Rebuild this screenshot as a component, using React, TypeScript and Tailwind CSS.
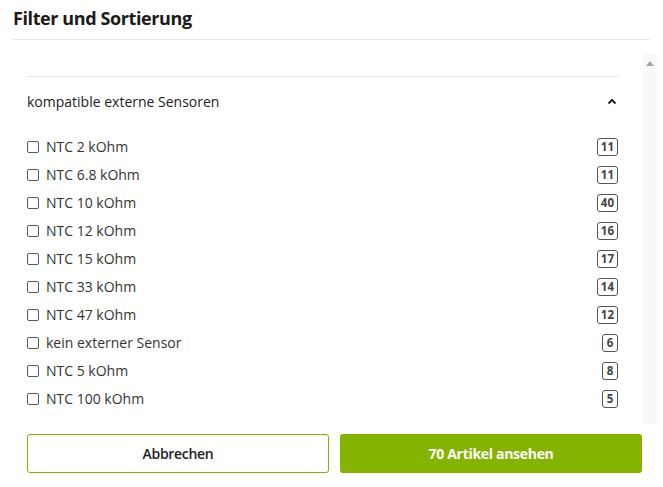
import React from 'react';

const items: { label: string; count: number }[] = [
    { label: 'NTC 2 kOhm', count: 11 },
    { label: 'NTC 6.8 kOhm', count: 11 },
    { label: 'NTC 10 kOhm', count: 40 },
    { label: 'NTC 12 kOhm', count: 16 },
    { label: 'NTC 15 kOhm', count: 17 },
    { label: 'NTC 33 kOhm', count: 14 },
    { label: 'NTC 47 kOhm', count: 12 },
    { label: 'kein externer Sensor', count: 6 },
    { label: 'NTC 5 kOhm', count: 8 },
    { label: 'NTC 100 kOhm', count: 5 },
];

const FilterRow: React.FC<{ label: string; count: number }> = ({ label, count }) => (
    <label className="flex items-center h-[28px] cursor-pointer">
        <span className="w-[12px] h-[12px] border border-[#5a5a5a] rounded-[2px] bg-white shrink-0" />
        <span className="ml-[7px] text-[14px] text-[#333] leading-none">{label}</span>
        <span className="ml-auto mr-[1px] min-w-[16px] h-[18px] px-[3px] border border-[#555] rounded-[3px] flex items-center justify-center text-[11.5px] font-bold text-[#444] leading-none">
            {count}
        </span>
    </label>
);

export default function App() {
    return (
        <div
            className="w-[663px] h-[487px] bg-white flex flex-col overflow-hidden"
            style={{ fontFamily: '"Open Sans", "Liberation Sans", sans-serif' }}
        >
            <header className="mx-[13px] h-[40px] border-b border-[#e6e6e6] flex items-center">
                <h1 className="text-[18px] font-bold text-[#1a1a1a] tracking-[-0.4px] -mt-[3px]">Filter und Sortierung</h1>
            </header>

            <div className="flex h-[384px]">
                <div className="pl-[27px] w-[619px] pt-[36px]">
                    <div className="border-t border-[#e6e6e6]">
                        <div className="flex items-center justify-between h-[48px]">
                            <span className="text-[14px] text-[#222]">kompatible externe Sensoren</span>
                            <svg width="10" height="7" viewBox="0 0 10 7" className="mr-[2px]">
                                <path d="M1.5 5.5 L5 2 L8.5 5.5" fill="none" stroke="#222" strokeWidth="2" />
                            </svg>
                        </div>
                        <div className="mt-[8px] flex flex-col">
                            {items.map((it) => (
                                <FilterRow key={it.label} label={it.label} count={it.count} />
                            ))}
                        </div>
                    </div>
                </div>
                <div className="ml-[24px] mt-[14px] w-[14px] bg-[#f8f8f8] flex justify-center">
                    <svg width="10" height="7" viewBox="0 0 10 7" className="mt-[6px]">
                        <path d="M1 6 L5 1 L9 6 Z" fill="#a3a3a3" />
                    </svg>
                </div>
            </div>

            <div className="flex gap-[11px] pl-[27px] pr-[21px] mt-[10px]">
                <button className="w-[302px] h-[39px] border border-[#84b400] rounded-[3px] bg-white text-[14px] font-semibold text-[#222] tracking-[-0.3px]">
                    Abbrechen
                </button>
                <button className="w-[302px] h-[39px] rounded-[3px] bg-[#84b400] text-[14px] font-bold text-white tracking-[-0.3px]">
                    70 Artikel ansehen
                </button>
            </div>
        </div>
    );
}
